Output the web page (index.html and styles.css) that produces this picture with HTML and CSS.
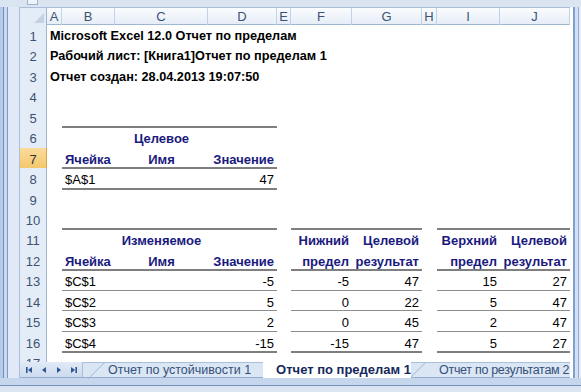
FILE: index.html
```html
<!DOCTYPE html>
<html lang="ru">
<head>
    <meta charset="UTF-8">
    <title>Отчет по пределам 1</title>
    <link rel="stylesheet" href="styles.css">
</head>
<body>
    <div class="window">
        <div class="frame-top"><span class="expand-box"></span></div>
        <div class="workspace">
            <div class="frame-left"></div>
            <div class="sheet-area">
                <div class="sheet">
                    <div class="row colhead">
                        <div class="corner"><span class="corner-tri"></span></div>
                        <div class="ch">A</div>
                        <div class="ch">B</div>
                        <div class="ch">C</div>
                        <div class="ch">D</div>
                        <div class="ch">E</div>
                        <div class="ch">F</div>
                        <div class="ch">G</div>
                        <div class="ch">H</div>
                        <div class="ch">I</div>
                        <div class="ch">J</div>
                    </div>

                    <div class="row">
                        <div class="rh">1</div>
                        <div class="cell title span-all">Microsoft Excel 12.0 Отчет по пределам</div>
                    </div>
                    <div class="row">
                        <div class="rh">2</div>
                        <div class="cell title span-all">Рабочий лист: [Книга1]Отчет по пределам 1</div>
                    </div>
                    <div class="row">
                        <div class="rh">3</div>
                        <div class="cell title span-all">Отчет создан: 28.04.2013 19:07:50</div>
                    </div>
                    <div class="row">
                        <div class="rh">4</div>
                    </div>
                    <div class="row">
                        <div class="rh">5</div>
                        <div class="cell col-b thick"></div>
                        <div class="cell col-c thick"></div>
                        <div class="cell col-d thick"></div>
                    </div>
                    <div class="row">
                        <div class="rh">6</div>
                        <div class="cell col-c head center">Целевое</div>
                    </div>
                    <div class="row">
                        <div class="rh active">7</div>
                        <div class="cell col-b head thick">Ячейка</div>
                        <div class="cell col-c head center thick">Имя</div>
                        <div class="cell col-d head right thick">Значение</div>
                    </div>
                    <div class="row">
                        <div class="rh">8</div>
                        <div class="cell col-b thick">$A$1</div>
                        <div class="cell col-c thick"></div>
                        <div class="cell col-d right thick">47</div>
                    </div>
                    <div class="row">
                        <div class="rh">9</div>
                    </div>
                    <div class="row">
                        <div class="rh">10</div>
                        <div class="cell col-b thick"></div>
                        <div class="cell col-c thick"></div>
                        <div class="cell col-d thick"></div>
                        <div class="cell col-f thick"></div>
                        <div class="cell col-g thick"></div>
                        <div class="cell col-i thick"></div>
                        <div class="cell col-j thick"></div>
                    </div>
                    <div class="row">
                        <div class="rh">11</div>
                        <div class="cell col-c head center">Изменяемое</div>
                        <div class="cell col-f head right">Нижний</div>
                        <div class="cell col-g head right">Целевой</div>
                        <div class="cell col-i head right">Верхний</div>
                        <div class="cell col-j head right">Целевой</div>
                    </div>
                    <div class="row">
                        <div class="rh">12</div>
                        <div class="cell col-b head thick">Ячейка</div>
                        <div class="cell col-c head center thick">Имя</div>
                        <div class="cell col-d head right thick">Значение</div>
                        <div class="cell col-f head right thick">предел</div>
                        <div class="cell col-g head right thick">результат</div>
                        <div class="cell col-i head right thick">предел</div>
                        <div class="cell col-j head right thick">результат</div>
                    </div>
                    <div class="row">
                        <div class="rh">13</div>
                        <div class="cell col-b thin">$C$1</div>
                        <div class="cell col-c thin"></div>
                        <div class="cell col-d right thin">-5</div>
                        <div class="cell col-f right thin">-5</div>
                        <div class="cell col-g right thin">47</div>
                        <div class="cell col-i right thin">15</div>
                        <div class="cell col-j right thin">27</div>
                    </div>
                    <div class="row">
                        <div class="rh">14</div>
                        <div class="cell col-b thin">$C$2</div>
                        <div class="cell col-c thin"></div>
                        <div class="cell col-d right thin">5</div>
                        <div class="cell col-f right thin">0</div>
                        <div class="cell col-g right thin">22</div>
                        <div class="cell col-i right thin">5</div>
                        <div class="cell col-j right thin">47</div>
                    </div>
                    <div class="row">
                        <div class="rh">15</div>
                        <div class="cell col-b thin">$C$3</div>
                        <div class="cell col-c thin"></div>
                        <div class="cell col-d right thin">2</div>
                        <div class="cell col-f right thin">0</div>
                        <div class="cell col-g right thin">45</div>
                        <div class="cell col-i right thin">2</div>
                        <div class="cell col-j right thin">47</div>
                    </div>
                    <div class="row">
                        <div class="rh">16</div>
                        <div class="cell col-b thick">$C$4</div>
                        <div class="cell col-c thick"></div>
                        <div class="cell col-d right thick">-15</div>
                        <div class="cell col-f right thick">-15</div>
                        <div class="cell col-g right thick">47</div>
                        <div class="cell col-i right thick">5</div>
                        <div class="cell col-j right thick">27</div>
                    </div>
                    <div class="row">
                        <div class="rh">17</div>
                    </div>
                </div>

                <div class="tabbar">
                    <div class="tab-nav">
                        <svg width="8" height="8" viewBox="0 0 8 8"><rect x="1" y="1" width="1.6" height="6" fill="#2f5597"/><path d="M7 1 L3 4 L7 7 Z" fill="#2f5597"/></svg>
                        <svg width="8" height="8" viewBox="0 0 8 8"><path d="M6 1 L2 4 L6 7 Z" fill="#2f5597"/></svg>
                        <svg width="8" height="8" viewBox="0 0 8 8"><path d="M2 1 L6 4 L2 7 Z" fill="#2f5597"/></svg>
                        <svg width="8" height="8" viewBox="0 0 8 8"><path d="M1 1 L5 4 L1 7 Z" fill="#2f5597"/><rect x="5.4" y="1" width="1.6" height="6" fill="#2f5597"/></svg>
                    </div>
                    <div class="tab tab-first">Отчет по устойчивости 1</div>
                    <div class="tab current">Отчет по пределам 1</div>
                    <div class="tab tab-last">Отчет по результатам 2</div>
                </div>
            </div>
            <div class="vscroll"></div>
        </div>
        <div class="frame-bottom"></div>
    </div>
</body>
</html>
```

FILE: styles.css
```css
body {
    margin: 0;
    font-family: "Liberation Sans", Arial, sans-serif;
    font-size: 13px;
    background: #c5d7ee;
    overflow: hidden;
}
.window {
    width: 581px;
    height: 392px;
    display: flex;
    flex-direction: column;
}
.frame-top {
    height: 7px;
    background: #dbe5f2;
    position: relative;
}
.expand-box {
    position: absolute;
    left: 27px;
    top: 0;
    width: 9px;
    height: 4px;
    border: 1px solid #9fb3cf;
    border-top: none;
    background: #eef3fa;
}
.workspace {
    display: flex;
    height: 371px;
}
.frame-left {
    width: 20px;
    background: linear-gradient(to right, #b5cbe8 0 3px, #6f8fbe 3px 4px, #c9d9ee 4px 7px, #7f9cc6 7px 8px, #e0e9f5 8px 19px, #a9bfdc 19px 20px);
}
.sheet-area {
    width: 550px;
    display: flex;
    flex-direction: column;
}
.sheet {
    height: 355px;
    background: #fff;
    overflow: hidden;
}
.vscroll {
    width: 11px;
    background: linear-gradient(to right, #fff 0 3px, #7fa0cc 3px 5px, #d3e1f3 5px 8px, #8eabd3 8px 9px, #e4ecf7 9px);
}

/* grid rows */
.row {
    display: grid;
    grid-template-columns: 27px 15px 53px 93px 69px 14px 61px 70px 15px 63px 70px;
    height: 20.45px;
}
.colhead {
    height: 18px;
    box-sizing: border-box;
    border-top: 1px solid #a9bdd8;
    border-bottom: 1px solid #9eb6ce;
    background: linear-gradient(#fafcfe, #e6edf7);
}
.corner {
    position: relative;
    background: #e4ecf7;
    border-right: 1px solid #9eb6ce;
}
.corner-tri {
    position: absolute;
    right: 2px;
    bottom: 2px;
    width: 0;
    height: 0;
    border-left: 10px solid transparent;
    border-bottom: 10px solid #c3d1e2;
}
.ch {
    color: #3d5272;
    text-align: center;
    line-height: 17px;
    border-right: 1px solid #c2d2e6;
}
.rh {
    grid-column: 1;
    box-sizing: border-box;
    background: #e4ecf7;
    border-right: 1px solid #9eb6ce;
    border-bottom: 1px solid #c2d2e6;
    color: #3d5272;
    text-align: center;
    line-height: 23px;
}
.rh.active {
    background: linear-gradient(#fbdc9c, #f3c467);
    border-right-color: #d9a54a;
    color: #333;
}

/* cells */
.cell {
    box-sizing: border-box;
    padding: 0 3px;
    white-space: nowrap;
    line-height: 23px;
    height: 20.45px;
}
.span-all {
    grid-column: 2 / -1;
}
.title {
    font-weight: bold;
    font-size: 12.7px;
}
.col-b { grid-column: 3; }
.col-c { grid-column: 4; }
.col-d { grid-column: 5; }
.col-f { grid-column: 7; }
.col-g { grid-column: 8; }
.col-i { grid-column: 10; }
.col-j { grid-column: 11; }
.head {
    color: #1a1a7e;
    font-weight: bold;
}
.center {
    text-align: center;
}
.right {
    text-align: right;
}
.thick {
    border-bottom: 1px solid #7f7f7f;
    box-shadow: 0 1px 0 #7f7f7f;
}
.thin {
    border-bottom: 1px solid #8c8c8c;
}

/* sheet tabs */
.tabbar {
    height: 16px;
    display: flex;
    background: linear-gradient(#e1eaf6, #ccdbee);
    border-bottom: 1px solid #93add1;
    box-sizing: border-box;
}
.tab-nav {
    width: 63px;
    flex: none;
    display: flex;
    align-items: center;
    gap: 7px;
    padding-left: 5px;
    box-sizing: border-box;
    border-right: 1px solid #a9bfdc;
}
.tab-nav svg {
    display: block;
}
.tab {
    position: relative;
    flex: none;
    font-size: 12.5px;
    line-height: 15px;
    color: #34507a;
    white-space: nowrap;
    background: #dbe6f4;
    border-top: 1px solid #a9bfdc;
}
.tab::before {
    content: "";
    position: absolute;
    left: 6px;
    top: -1px;
    width: 1px;
    height: 17px;
    background: #9db5d6;
    transform: skewX(-45deg);
}
.tab-first {
    padding: 0 12px 0 25px;
}
.tab-first::before {
    left: 13px;
}
.tab-last {
    letter-spacing: -0.3px;
    padding: 0 0 0 28px;
    flex: 1;
    overflow: hidden;
}
.tab.current {
    background: #fff;
    color: #16285c;
    font-size: 13px;
    font-weight: bold;
    padding: 0 0 0 13px;
    border-top: none;
    height: 16px;
}
.tab.current::before {
    display: none;
}
.frame-bottom {
    height: 14px;
    background: linear-gradient(#c5d6ed 0 7px, #6f8fbe 7px 8px, #dbe5f2 8px);
}
```
